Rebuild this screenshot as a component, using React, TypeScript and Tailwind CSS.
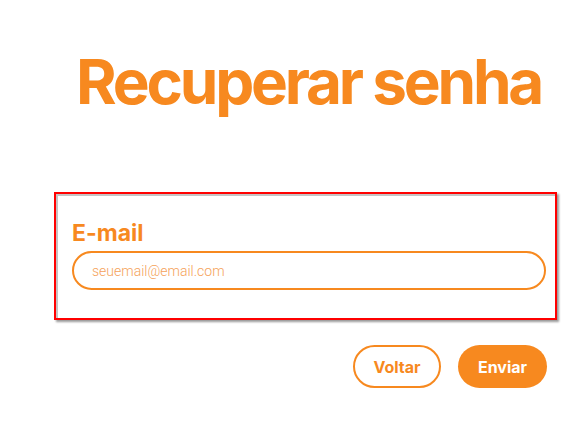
import React from 'react'

export default function App() {
  return (
    <div className="w-[570px] h-[439px] bg-white pl-[54px] pt-[44px] font-['Inter',sans-serif]">
      <div className="w-[503px]">
        <h1 className="pl-[22px] text-[62px] leading-[75px] font-bold tracking-[-3.2px] whitespace-nowrap text-[#f7891f]">
          Recuperar senha
        </h1>
        <div className="mt-[73px] h-[128px] border-2 border-[#ff0000] shadow-[2px_2px_2px_#9a9a9a,inset_2px_2px_0_#c4c4c4] pl-[16px] pr-[9px] pt-[25px]">
          <label className="block text-[23px] leading-[29px] font-bold text-[#f7891f]">E-mail</label>
          <input
            className="mt-[3px] w-full h-[39px] rounded-full border-2 border-[#f7891f] px-[18px] text-[14px] font-['Roboto',sans-serif] font-light outline-none placeholder:text-[#f5a25a]"
            placeholder="seuemail@email.com"
          />
        </div>
        <div className="flex justify-end gap-[17px] pr-[10px] mt-[25px]">
          <button className="w-[88px] h-[43px] rounded-full border-2 border-[#f7891f] text-[#f7891f] text-[16px] font-bold">
            Voltar
          </button>
          <button className="w-[89px] h-[43px] rounded-full bg-[#f7891f] text-white text-[16px] font-bold">
            Enviar
          </button>
        </div>
      </div>
    </div>
  )
}
